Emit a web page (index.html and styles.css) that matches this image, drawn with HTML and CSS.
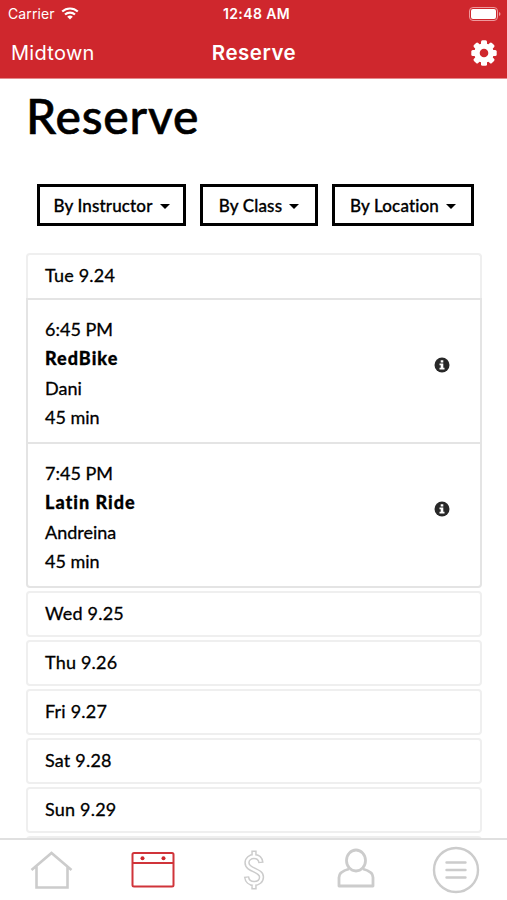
FILE: index.html
```html
<!DOCTYPE html>
<html lang="en">
<head>
	<meta charset="utf-8">
	<title>Reserve</title>
	<link rel="stylesheet" href="styles.css">
</head>
<body>
<header class="top">
	<div class="status">
		<div class="carrier">
			<span>Carrier</span>
			<svg class="wifi" viewBox="0 0 18 13" width="18" height="13">
				<path d="M1.2 4.6a11.2 11.2 0 0 1 15.6 0M4 7.6a7.2 7.2 0 0 1 10 0" fill="none" stroke="#fff" stroke-width="2.1"/>
				<path d="M6.2 9.7a4.2 4.2 0 0 1 5.6 0L9 12.6z" fill="#fff"/>
			</svg>
		</div>
		<div class="clock">12:48 AM</div>
		<svg class="battery" viewBox="0 0 32 14" width="32" height="14">
			<rect x=".5" y=".5" width="28" height="13" rx="3.5" fill="none" stroke="#ee9a9d"/>
			<rect x="2" y="2" width="25" height="10" rx="2" fill="#fff"/>
			<path d="M30 5v4q1.5-.7 1.5-2T30 5z" fill="#ee9a9d"/>
		</svg>
	</div>
	<div class="nav">
		<span class="place">Midtown</span>
		<span class="title">Reserve</span>
		<svg class="gear" viewBox="-13 -13 26 26" width="26" height="26">
			<g fill="#fff">
				<rect x="-3" y="-12.7" width="6" height="25.4" rx="1.5"/>
				<rect x="-3" y="-12.7" width="6" height="25.4" rx="1.5" transform="rotate(45)"/>
				<rect x="-3" y="-12.7" width="6" height="25.4" rx="1.5" transform="rotate(90)"/>
				<rect x="-3" y="-12.7" width="6" height="25.4" rx="1.5" transform="rotate(135)"/>
				<circle r="9.8"/>
			</g>
			<circle r="4.3" fill="#cf272d"/>
		</svg>
	</div>
</header>

<main>
	<h1>Reserve</h1>
	<div class="filters">
		<button class="filter instructor"><span>By Instructor</span><i class="caret"></i></button>
		<button class="filter class"><span>By Class</span><i class="caret"></i></button>
		<button class="filter location"><span>By Location</span><i class="caret"></i></button>
	</div>

	<div class="days">
		<section class="day open">
			<div class="date">Tue 9.24</div>
			<div class="session">
				<div>
					<p>6:45 PM</p>
					<p class="name">RedBike</p>
					<p>Dani</p>
					<p>45 min</p>
				</div>
				<svg class="info" viewBox="0 0 16 16" width="16" height="16">
					<circle cx="8" cy="8" r="7.5" fill="#282828"/>
					<path d="M6.7 3.2h2.6v2.2H6.7zM5.5 6.5h3.8v4.2h1.2v1.8h-5v-1.8h1.2V8.2H5.5z" fill="#fff"/>
				</svg>
			</div>
			<div class="session">
				<div>
					<p>7:45 PM</p>
					<p class="name">Latin Ride</p>
					<p>Andreina</p>
					<p>45 min</p>
				</div>
				<svg class="info" viewBox="0 0 16 16" width="16" height="16">
					<circle cx="8" cy="8" r="7.5" fill="#282828"/>
					<path d="M6.7 3.2h2.6v2.2H6.7zM5.5 6.5h3.8v4.2h1.2v1.8h-5v-1.8h1.2V8.2H5.5z" fill="#fff"/>
				</svg>
			</div>
		</section>
		<section class="day"><div class="date">Wed 9.25</div></section>
		<section class="day"><div class="date">Thu 9.26</div></section>
		<section class="day"><div class="date">Fri 9.27</div></section>
		<section class="day"><div class="date">Sat 9.28</div></section>
		<section class="day"><div class="date">Sun 9.29</div></section>
		<section class="day"><div class="date"></div></section>
	</div>
</main>

<nav class="tabs">
	<a class="tab">
		<svg viewBox="0 0 50 50" width="50" height="50" fill="none" stroke="#ccc" stroke-width="2.6">
			<path d="M4.500 25 24.500 8l20 17M9.500 21v21.500h31V21"/>
		</svg>
	</a>
	<a class="tab">
		<svg viewBox="0 0 50 50" width="50" height="50" fill="none" stroke="#d0343a" stroke-width="2">
			<rect x="4.500" y="8" width="41" height="33.500" rx="1.500"/>
			<path d="M4.500 18h41"/>
			<circle cx="14.500" cy="13.300" r="2" fill="#cf272d" stroke="none"/>
			<circle cx="35.500" cy="13.300" r="2" fill="#cf272d" stroke="none"/>
		</svg>
	</a>
	<a class="tab">
		<svg viewBox="0 0 50 50" width="50" height="50" fill="none">
			<path d="M25 5.500V12M25 38v6.500M32 18c-.5-4.500-3.300-6.500-7-6.500s-7 2.500-7 6.200c0 8 14.500 6.800 14.500 14.300 0 4-3.300 6.500-7.500 6.500s-7-2.800-7.500-7" stroke="#ccc" stroke-width="5.400"/>
			<path d="M25 7V12M25 38v5M31.800 16.800c-.8-3.600-3.300-5.300-6.800-5.300-3.700 0-7 2.500-7 6.200 0 8 14.500 6.800 14.500 14.300 0 4-3.300 6.500-7.500 6.500-3.900 0-6.600-2.200-7.300-5.800" stroke="#fff" stroke-width="2.400"/>
		</svg>
	</a>
	<a class="tab">
		<svg viewBox="0 0 50 50" width="50" height="50" fill="none" stroke="#ccc" stroke-width="2.800" stroke-linejoin="round">
			<ellipse cx="26" cy="15.500" rx="9.500" ry="10.500"/>
			<path d="M19 24c-6 1.500-10 4-10 8.500V41h34v-8.500c0-4.500-4-7-10-8.500"/>
		</svg>
	</a>
	<a class="tab">
		<svg viewBox="0 0 50 50" width="50" height="50" fill="none" stroke="#ccc" stroke-width="2.400">
			<circle cx="25" cy="25" r="22"/>
			<path d="M15.500 17.500h19M15.500 25h19M15.500 32.500h19" stroke-linecap="round"/>
		</svg>
	</a>
</nav>
</body>
</html>
```
FILE: styles.css
```css
*{box-sizing:border-box;}
body,h1,p{margin:0;padding:0;}
body{
	display:flex;
	flex-direction:column;
	height:900px;
	overflow:hidden;
	background:#fff;
	color:#000;
	font-family:Lato,"Liberation Sans",sans-serif;
	font-variant-ligatures:none;
}

/* red header */
.top{
	flex:none;
	height:79px;
	background:#cf272d;
	color:#fff;
	border-bottom:1px solid #e5898c;
	font-family:Inter,"Liberation Sans",sans-serif;
}
.status,.nav{
	display:grid;
	grid-template-columns:1fr auto 1fr;
	align-items:center;
}
.status{
	height:27px;
	padding:0 6px 0 8px;
	font-size:14px;
}
.carrier{
	display:flex;
	align-items:center;
	gap:6px;
	letter-spacing:0.1px;
}
.clock{
	padding-left:4px;
	font-weight:600;
	letter-spacing:0.4px;
}
.battery{justify-self:end;}
.nav{
	height:51px;
	padding:0 10px 0 11px;
}
.place{
	font-size:20px;
	letter-spacing:0.3px;
}
.title{
	font-size:20.500px;
	font-weight:600;
	letter-spacing:0.5px;
}
.gear{justify-self:end;}

main{
	flex:1;
	min-height:0;
	overflow:hidden;
	padding:0 25px 0 26px;
}
h1{
	margin-top:4px;
	font-size:48px;
	line-height:66px;
	font-weight:500;
	letter-spacing:0.8px;
	-webkit-text-stroke:0.6px #000;
}
.filters{
	display:flex;
	gap:14px;
	margin:35px 0 0 11px;
}
.filter{
	display:flex;
	align-items:center;
	justify-content:center;
	gap:7px;
	height:42px;
	padding:0;
	background:#fff;
	border:3px solid #000;
	color:#000;
	font:500 17px Lato,"Liberation Sans",sans-serif;
	font-variant-ligatures:none;
	letter-spacing:0.15px;
	white-space:nowrap;
	-webkit-text-stroke:0.3px #000;
}
.instructor{width:149px;}
.class{width:118px;}
.location{width:142px;}
.caret{
	border:5px solid transparent;
	border-top-color:#000;
	border-bottom:0;
	margin-top:2px;
}

/* schedule */
.days{
	display:flex;
	flex-direction:column;
	gap:3px;
	margin-top:27px;
	font-size:18px;
	-webkit-text-stroke:0.3px #000;
}
.date{
	height:46px;
	padding-left:17px;
	border:2px solid #efefef;
	border-radius:4px;
	line-height:41px;
	letter-spacing:0.2px;
}
.open .date{
	border-bottom:0;
	border-radius:4px 4px 0 0;
	height:45px;
}
.session{
	display:flex;
	align-items:center;
	justify-content:space-between;
	height:144px;
	padding:5px 30px 0 17px;
	border:2px solid #e4e4e4;
	border-bottom:0;
	line-height:29.4px;
}
.session:last-child{
	height:146px;
	border-bottom:2px solid #e4e4e4;
	border-radius:0 0 4px 4px;
}
.session .name{
	font-weight:900;
	letter-spacing:1px;
}
.info{margin-top:-18px;}

/* bottom bar */
.tabs{
	flex:none;
	display:grid;
	grid-template-columns:repeat(5,1fr);
	height:62px;
	padding-left:1px;
	border-top:2px solid #e0e0e0;
	background:#fff;
}
.tab{
	display:flex;
	align-items:center;
	justify-content:center;
}
```
